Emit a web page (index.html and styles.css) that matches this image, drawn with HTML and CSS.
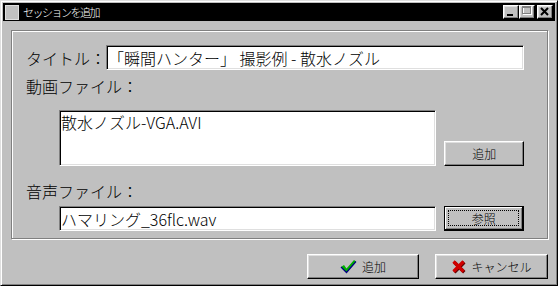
FILE: index.html
```html
<!DOCTYPE html>
<html lang="ja">
<head>
	<meta charset="UTF-8">
	<title>セッションを追加</title>
	<link rel="stylesheet" href="styles.css">
</head>
<body>

	<div class="window">
		<div class="titlebar">
			<span class="app-icon"></span>
			<span class="caption">セッションを追加</span>
			<div class="caption-buttons">
				<span class="cap-btn">
					<svg width="14" height="12" viewBox="0 0 14 12"><rect x="3" y="8" width="6" height="2" fill="#000"/></svg>
				</span>
				<span class="cap-btn">
					<svg width="14" height="12" viewBox="0 0 14 12" shape-rendering="crispEdges">
						<rect x="3.5" y="1.5" width="8" height="7" fill="none" stroke="#fff"/>
						<rect x="2.5" y="0.5" width="8" height="7" fill="none" stroke="#808080"/>
						<rect x="2" y="1" width="9" height="1" fill="#808080"/>
					</svg>
				</span>
				<span class="cap-btn close">
					<svg width="14" height="12" viewBox="0 0 14 12"><path d="M3 2 L10 9 M10 2 L3 9" stroke="#000" stroke-width="2"/></svg>
				</span>
			</div>
		</div>

		<div class="content">
			<div class="group">
				<div class="title-row">
					<span class="label-inline">タイトル：</span>
					<input class="field title-field" type="text" value="「瞬間ハンター」 撮影例 - 散水ノズル" readonly>
				</div>

				<div class="label video-label">動画ファイル：</div>
				<div class="file-row">
					<textarea class="field video-field" readonly>散水ノズル-VGA.AVI</textarea>
					<button class="btn small-btn">追加</button>
				</div>

				<div class="label audio-label">音声ファイル：</div>
				<div class="file-row audio-row">
					<input class="field audio-field" type="text" value="ハマリング_36flc.wav" readonly>
					<button class="btn small-btn default"><span class="focus">参照</span></button>
				</div>
			</div>

			<div class="footer">
				<button class="btn wide-btn ok">
					<svg width="17" height="15" viewBox="0 0 17 15">
						<path d="M1 8 L4 6 L6.5 9.5 L14 1 L16 2.5 L6.5 13.5 Z" fill="#00b000"/>
						<path d="M1 8 L6.5 13.5 L16 2.5" fill="none" stroke="#000080" stroke-width="1.2"/>
					</svg>
					追加
				</button>
				<button class="btn wide-btn cancel">
					<svg width="15" height="15" viewBox="0 0 15 15">
						<path d="M2.5 2.5 L12.5 12.5 M12.5 2.5 L2.5 12.5" stroke="#600000" stroke-width="3.4" transform="translate(0.8 0.8)"/>
						<path d="M2.5 2.5 L12.5 12.5 M12.5 2.5 L2.5 12.5" stroke="#d00000" stroke-width="3.2"/>
					</svg>
					キャンセル
				</button>
			</div>
		</div>
	</div>

</body>
</html>
```

FILE: styles.css
```css
body {
	margin: 0;
	background: #c0c0c0;
	font-family: "Noto Sans CJK JP", sans-serif;
	font-weight: 300;
	color: #000;
}

.window {
	width: 558px;
	height: 286px;
	box-sizing: border-box;
	padding: 2px;
	background: #c0c0c0;
	border: 1px solid;
	border-color: #dfdfdf #000 #000 #dfdfdf;
	box-shadow: inset 1px 1px #fff, inset -1px -1px #808080;
}

.titlebar {
	height: 18px;
	display: flex;
	align-items: center;
	padding: 0 2px;
	background: #000;
	color: #fff;
}

.app-icon {
	width: 12px;
	height: 13px;
	background: #c0c0c0;
	border: 1px solid #dfdfdf;
}

.caption {
	margin-left: 4px;
	font-size: 11px;
	line-height: 18px;
	letter-spacing: -1.5px;
}

.caption-buttons {
	margin-left: auto;
	display: flex;
}

.cap-btn {
	width: 14px;
	height: 12px;
	display: block;
	border: 1px solid;
	border-color: #fff #000 #000 #fff;
	box-shadow: inset -1px -1px #808080, inset 1px 1px #dfdfdf;
	background: #c0c0c0;
}

.cap-btn svg {
	display: block;
}

.cap-btn.close {
	margin-left: 2px;
}

.content {
	padding: 9px 7px 0 8px;
}

.group {
	height: 209px;
	box-sizing: border-box;
	padding: 14px 23px 0 14px;
	border: 1px solid #808080;
	box-shadow: inset 1px 1px #fff, 1px 1px #fff;
}

.title-row {
	display: flex;
	height: 25px;
	align-items: center;
}

.label-inline {
	width: 80px;
	font-size: 16px;
	line-height: 20px;
}

.label {
	font-size: 16px;
	line-height: 20px;
}

.video-label {
	margin-top: 6px;
}

.audio-label {
	margin-top: 15px;
}

.field {
	box-sizing: border-box;
	margin: 0;
	padding: 0 1px;
	font-family: "Noto Sans CJK JP", sans-serif;
	font-weight: 300;
	font-size: 16px;
	color: #000;
	background: #fff;
	border: 1px solid;
	border-color: #808080 #fff #fff #808080;
	box-shadow: inset 1px 1px #000, inset -1px -1px #dfdfdf;
	outline: none;
}

.title-field {
	flex: 1;
	height: 25px;
}

.file-row {
	display: flex;
	align-items: flex-end;
	gap: 8px;
	margin: 14px 0 0 33px;
}

.video-field {
	width: 384px;
	height: 56px;
	resize: none;
	line-height: 20px;
	padding-top: 1px;
	overflow: hidden;
}

.audio-row {
	margin-top: 5px;
}

.audio-field {
	width: 384px;
	height: 25px;
}

.btn {
	box-sizing: border-box;
	margin: 0;
	padding: 0;
	height: 25px;
	font-family: "Noto Sans CJK JP", sans-serif;
	font-weight: 300;
	font-size: 12px;
	color: #000;
	background: #c0c0c0;
	border: 1px solid;
	border-color: #fff #000 #000 #fff;
	box-shadow: inset -1px -1px #808080, inset 1px 1px #dfdfdf;
	display: flex;
	align-items: center;
	justify-content: center;
}

.small-btn {
	width: 81px;
}

.btn.default {
	border-color: #000;
	box-shadow: inset -1px -1px #000, inset 1px 1px #fff, inset -2px -2px #808080;
	padding: 3px 4px 4px 3px;
}

.focus {
	flex: 1;
	align-self: stretch;
	display: flex;
	align-items: center;
	justify-content: center;
	border: 1px dotted #000;
}

.footer {
	display: flex;
	justify-content: flex-end;
	gap: 16px;
	margin-top: 15px;
}

.wide-btn {
	width: 112px;
	gap: 5px;
}

.wide-btn.cancel {
	width: 113px;
}

.wide-btn svg {
	display: block;
}
```
